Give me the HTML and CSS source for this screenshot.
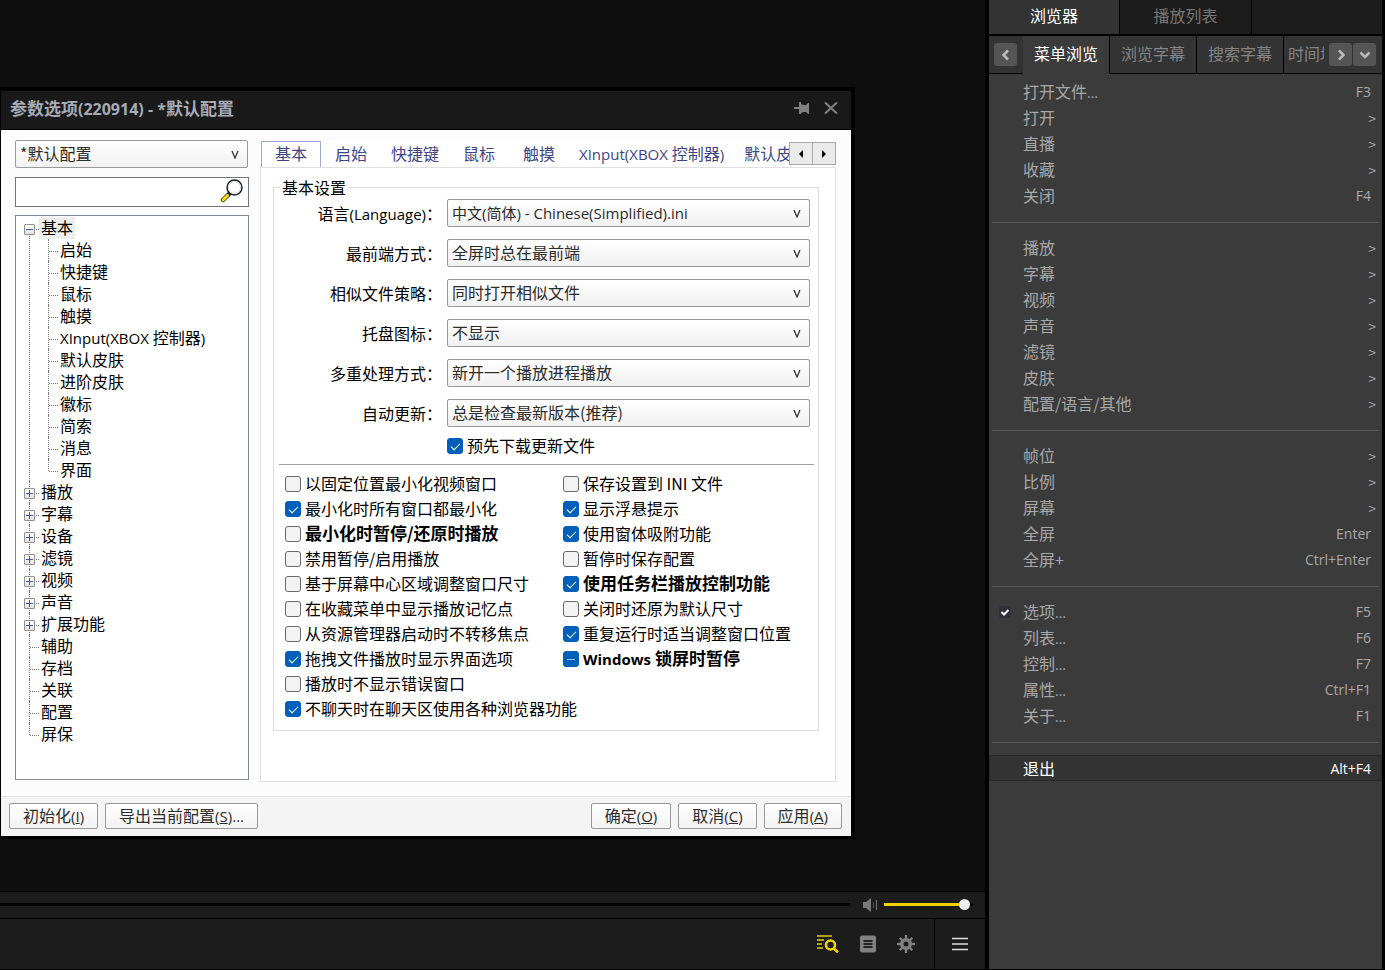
FILE: index.html
```
<!DOCTYPE html>
<html lang="zh-CN">
<head>
<meta charset="utf-8">
<title>参数选项</title>
<link rel="stylesheet" href="styles.css">
</head>
<body>
<div class="app">
  <main class="player">
    <div class="stage">
      <section class="dialog" aria-label="参数选项">
        <header class="dialog-head">
          <h1>参数选项<span class="en">(220914) - *</span>默认配置</h1>
          <button class="icon-btn" aria-label="置顶"><svg width="16" height="14" viewBox="0 0 16 14"><path d="M0 6h5v2H0zM5 1h2v2l2 1h3l2-2h1v11h-1l-2-2H9l-2 1v1H5z" fill="#808080"/></svg></button>
          <button class="icon-btn" aria-label="关闭"><svg width="14" height="14" viewBox="0 0 14 14"><path d="M1 1.500l12 11M13 1.500l-12 11" stroke="#808080" stroke-width="2" fill="none"/></svg></button>
        </header>
        <div class="dialog-body">
          <div class="side">
            <div class="combo profile"><select aria-label="配置"><option>*默认配置</option></select><svg width="8" height="9" viewBox="0 0 8 9"><path d="M1 1L4 8L7 1" /></svg></div>
            <div class="search"><input type="text" aria-label="搜索"><button class="icon-btn" aria-label="查找"><svg width="24" height="24" viewBox="0 0 24 24"><path d="M9.500 14.500L3 21" stroke="#222" stroke-width="4.500" stroke-linecap="round"/><path d="M7.500 16.500L3 21" stroke="#ffe100" stroke-width="3" stroke-linecap="round"/><circle cx="14.500" cy="8.500" r="7.500" fill="#fff" stroke="#222" stroke-width="1.500"/><circle cx="14.500" cy="8.500" r="6" fill="none" stroke="#d5d9e3"/></svg></button></div>
            <ul class="tree">
              <li><div class="node"><button class="expander" aria-label="折叠"></button><span class="name selected">基本</span></div>
                <ul>
                  <li><div class="node"><span class="name">启始</span></div></li>
                  <li><div class="node"><span class="name">快捷键</span></div></li>
                  <li><div class="node"><span class="name">鼠标</span></div></li>
                  <li><div class="node"><span class="name">触摸</span></div></li>
                  <li><div class="node"><span class="name"><span class="en">XInput(XBOX </span>控制器<span class="en">)</span></span></div></li>
                  <li><div class="node"><span class="name">默认皮肤</span></div></li>
                  <li><div class="node"><span class="name">进阶皮肤</span></div></li>
                  <li><div class="node"><span class="name">徽标</span></div></li>
                  <li><div class="node"><span class="name">简索</span></div></li>
                  <li><div class="node"><span class="name">消息</span></div></li>
                  <li><div class="node"><span class="name">界面</span></div></li>
                </ul>
              </li>
              <li><div class="node"><button class="expander plus" aria-label="展开"></button><span class="name">播放</span></div></li>
              <li><div class="node"><button class="expander plus" aria-label="展开"></button><span class="name">字幕</span></div></li>
              <li><div class="node"><button class="expander plus" aria-label="展开"></button><span class="name">设备</span></div></li>
              <li><div class="node"><button class="expander plus" aria-label="展开"></button><span class="name">滤镜</span></div></li>
              <li><div class="node"><button class="expander plus" aria-label="展开"></button><span class="name">视频</span></div></li>
              <li><div class="node"><button class="expander plus" aria-label="展开"></button><span class="name">声音</span></div></li>
              <li><div class="node"><button class="expander plus" aria-label="展开"></button><span class="name">扩展功能</span></div></li>
              <li><div class="node"><span class="name">辅助</span></div></li>
              <li><div class="node"><span class="name">存档</span></div></li>
              <li><div class="node"><span class="name">关联</span></div></li>
              <li><div class="node"><span class="name">配置</span></div></li>
              <li><div class="node"><span class="name">屏保</span></div></li>
            </ul>
          </div>
          <div class="content">
            <div class="tab-row">
              <div class="tabs" role="tablist">
                <button class="tab active" role="tab">基本</button>
                <button class="tab" role="tab">启始</button>
                <button class="tab" role="tab">快捷键</button>
                <button class="tab" role="tab">鼠标</button>
                <button class="tab" role="tab">触摸</button>
                <button class="tab" role="tab"><span class="en">XInput(XBOX </span>控制器<span class="en">)</span></button>
                <button class="tab" role="tab">默认皮肤</button>
              </div>
              <div class="spin">
                <button aria-label="向左"><svg width="4" height="8" viewBox="0 0 4 8"><path d="M4 0v8L0 4z"/></svg></button>
                <button aria-label="向右"><svg width="4" height="8" viewBox="0 0 4 8"><path d="M0 0v8l4-4z"/></svg></button>
              </div>
            </div>
            <div class="page">
              <fieldset>
                <legend>基本设置</legend>
                <div class="fields">
                  <label for="f1">语言<span class="en">(Language)</span>：</label><div class="combo"><select id="f1" class="mostly-en"><option>中文(简体) - Chinese(Simplified).ini</option></select><svg width="8" height="9" viewBox="0 0 8 9"><path d="M1 1L4 8L7 1"/></svg></div>
                  <label for="f2">最前端方式：</label><div class="combo"><select id="f2"><option>全屏时总在最前端</option></select><svg width="8" height="9" viewBox="0 0 8 9"><path d="M1 1L4 8L7 1"/></svg></div>
                  <label for="f3">相似文件策略：</label><div class="combo"><select id="f3"><option>同时打开相似文件</option></select><svg width="8" height="9" viewBox="0 0 8 9"><path d="M1 1L4 8L7 1"/></svg></div>
                  <label for="f4">托盘图标：</label><div class="combo"><select id="f4"><option>不显示</option></select><svg width="8" height="9" viewBox="0 0 8 9"><path d="M1 1L4 8L7 1"/></svg></div>
                  <label for="f5">多重处理方式：</label><div class="combo"><select id="f5"><option>新开一个播放进程播放</option></select><svg width="8" height="9" viewBox="0 0 8 9"><path d="M1 1L4 8L7 1"/></svg></div>
                  <label for="f6">自动更新：</label><div class="combo"><select id="f6"><option>总是检查最新版本(推荐)</option></select><svg width="8" height="9" viewBox="0 0 8 9"><path d="M1 1L4 8L7 1"/></svg></div>
                </div>
                <label class="check predownload"><input type="checkbox" checked><span>预先下载更新文件</span></label>
                <hr>
                <div class="checks">
                  <div>
                    <label class="check"><input type="checkbox"><span>以固定位置最小化视频窗口</span></label>
                    <label class="check"><input type="checkbox" checked><span>最小化时所有窗口都最小化</span></label>
                    <label class="check strong"><input type="checkbox"><span>最小化时暂停/还原时播放</span></label>
                    <label class="check"><input type="checkbox"><span>禁用暂停/启用播放</span></label>
                    <label class="check"><input type="checkbox"><span>基于屏幕中心区域调整窗口尺寸</span></label>
                    <label class="check"><input type="checkbox"><span>在收藏菜单中显示播放记忆点</span></label>
                    <label class="check"><input type="checkbox"><span>从资源管理器启动时不转移焦点</span></label>
                    <label class="check"><input type="checkbox" checked><span>拖拽文件播放时显示界面选项</span></label>
                    <label class="check"><input type="checkbox"><span>播放时不显示错误窗口</span></label>
                    <label class="check"><input type="checkbox" checked><span>不聊天时在聊天区使用各种浏览器功能</span></label>
                  </div>
                  <div>
                    <label class="check"><input type="checkbox"><span>保存设置到 INI 文件</span></label>
                    <label class="check"><input type="checkbox" checked><span>显示浮悬提示</span></label>
                    <label class="check"><input type="checkbox" checked><span>使用窗体吸附功能</span></label>
                    <label class="check"><input type="checkbox"><span>暂停时保存配置</span></label>
                    <label class="check strong"><input type="checkbox" checked><span>使用任务栏播放控制功能</span></label>
                    <label class="check"><input type="checkbox"><span>关闭时还原为默认尺寸</span></label>
                    <label class="check"><input type="checkbox" checked><span>重复运行时适当调整窗口位置</span></label>
                    <label class="check strong"><input type="checkbox" class="mixed" checked><span><span class="en">Windows </span>锁屏时暂停</span></label>
                  </div>
                </div>
              </fieldset>
            </div>
          </div>
        </div>
        <footer class="dialog-foot">
          <button class="btn">初始化<span class="en">(<u>I</u>)</span></button>
          <button class="btn">导出当前配置<span class="en">(<u>S</u>)...</span></button>
          <span class="grow"></span>
          <button class="btn">确定<span class="en">(<u>O</u>)</span></button>
          <button class="btn">取消<span class="en">(<u>C</u>)</span></button>
          <button class="btn">应用<span class="en">(<u>A</u>)</span></button>
        </footer>
      </section>
    </div>
    <div class="seek-row">
      <div class="seek"></div>
      <svg width="16" height="14" viewBox="0 0 16 14"><path d="M1 4h3l5-4v14l-5-4H1z" fill="#787878"/><path d="M11.500 4v6" stroke="#555"/><path d="M14.500 2v10" stroke="#787878"/></svg>
      <input class="volume" type="range" min="0" max="100" value="96" aria-label="音量">
    </div>
    <div class="tool-row">
      <div class="tools">
        <button class="icon-btn" aria-label="搜索列表"><svg width="22" height="18" viewBox="0 0 22 18"><path d="M0 1h15M0 5h7M0 9h5M0 13h6" stroke="#e6cf00" stroke-width="1.400"/><circle cx="13.500" cy="10" r="4.500" fill="none" stroke="#ecd400" stroke-width="2.600"/><path d="M17 13.500l4 4" stroke="#ecd400" stroke-width="2.600"/></svg></button>
        <button class="icon-btn" aria-label="播放列表"><svg width="16" height="18" viewBox="0 0 16 18"><rect y="0.500" width="16" height="17" rx="2" fill="#808080"/><path d="M3.500 6h9M3.500 9h9M3.500 12h9" stroke="#222" stroke-width="2"/></svg></button>
        <button class="icon-btn" aria-label="设置"><svg width="18" height="18" viewBox="0 0 18 18"><g stroke="#808080" stroke-width="2.400"><path d="M9 0v18M0 9h18M2.800 2.800l12.400 12.400M15.200 2.800L2.800 15.200"/></g><circle cx="9" cy="9" r="6" fill="#808080"/><circle cx="9" cy="9" r="2.500" fill="#1d1d1d"/></svg></button>
      </div>
      <button class="icon-btn burger" aria-label="菜单"><svg width="16" height="14" viewBox="0 0 16 14"><path d="M0 1.500h16M0 7h16M0 12.500h16" stroke="#ddd" stroke-width="1.600"/></svg></button>
    </div>
  </main>
  <aside class="panel">
    <div class="top-tabs">
      <button class="top-tab active">浏览器</button>
      <button class="top-tab">播放列表</button>
      <span class="top-rest"></span>
    </div>
    <div class="sub-tabs">
      <div class="prev"><button class="nav" aria-label="上一个"><svg width="8" height="12" viewBox="0 0 8 12"><path d="M6 1.500L1.500 6L6 10.500"/></svg></button></div>
      <button class="sub-tab active">菜单浏览</button>
      <button class="sub-tab">浏览字幕</button>
      <button class="sub-tab">搜索字幕</button>
      <button class="sub-tab cut"><span>时间均</span></button>
      <div class="next">
        <button class="nav" aria-label="下一个"><svg width="8" height="12" viewBox="0 0 8 12"><path d="M2 1.500L6.500 6L2 10.500"/></svg></button>
        <button class="nav" aria-label="更多"><svg width="12" height="8" viewBox="0 0 12 8"><path d="M1.500 1.500L6 6l4.500-4.500"/></svg></button>
      </div>
    </div>
    <div class="menu">
      <button class="item"><span>打开文件<span class="en">...</span></span><span class="en">F3</span></button>
      <button class="item">打开<span class="more">&gt;</span></button>
      <button class="item">直播<span class="more">&gt;</span></button>
      <button class="item">收藏<span class="more">&gt;</span></button>
      <button class="item">关闭<span class="en">F4</span></button>
      <hr>
      <button class="item">播放<span class="more">&gt;</span></button>
      <button class="item">字幕<span class="more">&gt;</span></button>
      <button class="item">视频<span class="more">&gt;</span></button>
      <button class="item">声音<span class="more">&gt;</span></button>
      <button class="item">滤镜<span class="more">&gt;</span></button>
      <button class="item">皮肤<span class="more">&gt;</span></button>
      <button class="item">配置/语言/其他<span class="more">&gt;</span></button>
      <hr>
      <button class="item">帧位<span class="more">&gt;</span></button>
      <button class="item">比例<span class="more">&gt;</span></button>
      <button class="item">屏幕<span class="more">&gt;</span></button>
      <button class="item">全屏<span class="en">Enter</span></button>
      <button class="item">全屏+<span class="en">Ctrl+Enter</span></button>
      <hr>
      <button class="item"><svg class="tick" width="12" height="12" viewBox="0 0 12 12"><rect width="12" height="12" rx="2" fill="#30303c"/><path d="M2.500 6l2.500 2.500L9.500 4" fill="none" stroke="#fff" stroke-width="2"/></svg><span>选项<span class="en">...</span></span><span class="en">F5</span></button>
      <button class="item"><span>列表<span class="en">...</span></span><span class="en">F6</span></button>
      <button class="item"><span>控制<span class="en">...</span></span><span class="en">F7</span></button>
      <button class="item"><span>属性<span class="en">...</span></span><span class="en">Ctrl+F1</span></button>
      <button class="item"><span>关于<span class="en">...</span></span><span class="en">F1</span></button>
      <hr>
      <button class="item hot">退出<span class="en">Alt+F4</span></button>
    </div>
  </aside>
</div>
</body>
</html>
```
FILE: styles.css
```
* { box-sizing: border-box; }
body {
  margin: 0;
  background: #000;
  font: 16px/22px "Noto Sans CJK SC", sans-serif;
}
button, input, select { font: inherit; color: inherit; margin: 0; }
button { padding: 0; border: 0; background: none; white-space: nowrap; }
svg { display: block; flex: none; }
ul { list-style: none; margin: 0; padding: 0; }
.en { font-family: "Open Sans", sans-serif; font-size: 14px; line-height: 20px; white-space: pre; }

.app { display: flex; min-height: 100vh; padding: 0 3px 1px 0; }
.player { flex: 1; min-width: 0; display: flex; flex-direction: column; margin-right: 4px; }
.stage { flex: 1; background: #0f0f0f; padding: 87px 130px 52px 0; }
.icon-btn { display: flex; align-items: center; justify-content: center; }

/* dialog */
.dialog { border: solid #000; border-width: 4px 4px 3px 1px; background: #fcfcfc; color: #000; }
.dialog .en { font-size: 15px; }
.dialog-head { display: flex; align-items: center; gap: 14px; height: 39px; padding: 0 13px 5px 9px; background: #191919; border-bottom: 1px solid #000; }
.dialog-head h1 { flex: 1; margin: 0; font-size: 17px; line-height: 22px; color: #a6abb8; }
.dialog .dialog-head .en { font-size: 16px; }
.dialog-body { display: grid; grid-template-columns: 234px 1fr; gap: 11px; padding: 10px 15px 14px 14px; }
.side { display: flex; flex-direction: column; padding-bottom: 2px; }
.combo { position: relative; height: 28px; }
.combo select { display: block; width: 100%; height: 100%; appearance: none; padding: 0 28px 2px 4px; border: 1px solid #999; border-radius: 2px; background: linear-gradient(#fff, #f1f1f1); color: #2c2c2c; }
.combo .mostly-en { font: 15px/22px "Open Sans", "Noto Sans CJK SC", sans-serif; padding-bottom: 0; }
.combo svg { position: absolute; right: 9px; top: 10px; fill: none; stroke: #333; stroke-width: 1.3; pointer-events: none; }
.profile { margin-right: 1px; }
.search { display: flex; align-items: center; height: 30px; margin: 9px 0 8px; padding: 0 4px 2px 0; border: 1px solid #70737d; background: #fff; }
.search input { flex: 1; min-width: 0; border: 0; outline: 0; background: none; }

.tree { flex: 1; padding: 1px 8px; border: 1px solid #828790; background: #fff; }
.tree li { position: relative; }
.tree li::before { content: ""; position: absolute; left: 5px; top: 0; bottom: 0; border-left: 1px dotted #777; }
.tree > li:first-child::before { top: 12px; }
.tree li:last-child::before { bottom: auto; height: 12px; }
.tree ul { margin-left: 19px; }
.node { position: relative; display: flex; align-items: flex-start; height: 22px; padding-left: 15px; }
.node::before { content: ""; position: absolute; left: 6px; top: 12px; width: 9px; border-top: 1px dotted #777; }
.name { height: 22px; padding: 0 2px; line-height: 20px; white-space: nowrap; }
.selected { background: #eee; }
.expander { position: absolute; left: 0; top: 7px; width: 11px; height: 11px; border: 1px solid #919191; border-radius: 1px; background: linear-gradient(#3f5a9c, #3f5a9c) center / 7px 1px no-repeat, linear-gradient(#fff, #e2e2e2); }
.plus { background: linear-gradient(#3f5a9c, #3f5a9c) center / 7px 1px no-repeat, linear-gradient(#3f5a9c, #3f5a9c) center / 1px 7px no-repeat, linear-gradient(#fff, #e2e2e2); }

.content { min-width: 0; display: flex; flex-direction: column; }
.tab-row { display: flex; height: 27px; padding-left: 1px; background: #fff; }
.tabs { flex: 1; min-width: 0; display: flex; overflow: hidden; padding-top: 1px; }
.tab { flex: none; min-width: 60px; padding: 0 10px 3px; color: #3d4587; }
.tab.active { border: 1px solid #a0a9d0; border-bottom: 0; }
.spin { display: flex; height: 23px; margin-top: 2px; }
.spin button { width: 24px; display: flex; align-items: center; justify-content: center; border: 1px solid #aaa; background: #eaeaea; }
.spin button + button { margin-left: -1px; }
.page { flex: 1; padding: 9px 16px 50px 12px; border: 1px solid #e0e0e0; background: #fff; }
fieldset { min-width: 0; margin: 0; padding: 2px 4px 8px 5px; border: 1px solid #dcdcdc; }
legend { margin-left: 1px; padding: 0 2px; line-height: 20px; }
.fields { display: grid; grid-template-columns: 163px 1fr; align-items: center; gap: 12px 5px; margin-right: 4px; }
.fields label { text-align: right; white-space: nowrap; }
.check { display: flex; align-items: center; gap: 4px; height: 25px; white-space: nowrap; }
.check > span { height: 24px; line-height: 22px; }
.check input { position: relative; flex: none; appearance: none; width: 16px; height: 16px; border: 1px solid #686868; border-radius: 3px; background: #f3f3f3; }
.check input:checked { border-color: #005fb8; background: #005fb8; }
.check input:checked::after { content: ""; position: absolute; left: 3px; top: 4px; width: 8px; height: 4px; border: solid #fff; border-width: 0 0 1px 1px; transform: rotate(-45deg); }
.check input.mixed:checked::after { top: 3px; border-left: 0; border-color: #8fc0ee; transform: none; }
.strong { font-size: 17px; font-weight: bold; }
.predownload { margin: 6px 0 6px 168px; }
hr { margin: 0; border: 0; border-top: 1px solid #a0a0a0; }
.checks { display: grid; grid-template-columns: 278px 1fr; padding: 6px 0 1px 6px; }

.dialog-foot { display: flex; gap: 7px; padding: 6px 9px 7px 8px; border-top: 1px solid #e0e0e0; background: #f4f4f4; }
.btn { height: 26px; padding: 0 13px 2px; border: 1px solid #999; border-radius: 2px; background: linear-gradient(#fff, #f3f3f3); color: #2c2c2c; }
.grow { flex: 1; }

/* player controls */
.seek-row { display: flex; align-items: center; height: 27px; margin-top: 1px; padding: 0 12px 1px 0; background: #1c1c1c; border-bottom: 1px solid #000; }
.seek { flex: 1; height: 3px; margin-right: 12px; background: #000; }
.volume { appearance: none; width: 89px; height: 11px; margin-left: 6px; background: linear-gradient(90deg, #ecd400 80px, #000 80px) center / 100% 3px no-repeat; }
.volume::-webkit-slider-thumb { appearance: none; width: 11px; height: 11px; border-radius: 50%; background: #eee; }
.tool-row { display: flex; height: 50px; background: #1c1c1c; }
.tools { flex: 1; display: flex; align-items: center; justify-content: flex-end; gap: 21px; padding-right: 19px; }
.burger { width: 51px; border-left: 1px solid #000; }

/* browser panel */
.panel { display: flex; flex-direction: column; width: 393px; background: #3b3b3b; color: #a8a8a8; }
.top-tabs { display: flex; height: 36px; padding-bottom: 2px; background: #000; gap: 1px; }
.top-tab { width: 131px; padding-bottom: 5px; background: #1c1c1c; color: #777; }
.top-tab.active { width: 130px; background: #333; color: #fff; }
.top-rest { flex: 1; background: #1c1c1c; }
.sub-tabs { display: flex; height: 38px; background: #333; }
.prev, .next { display: flex; align-items: center; gap: 1px; border-bottom: 1px solid #000; }
.prev { width: 34px; padding-left: 5px; }
.next { padding: 0 6px 0 5px; }
.nav { display: flex; align-items: center; justify-content: center; width: 23px; height: 23px; border-radius: 3px; background: #555; }
.nav svg { fill: none; stroke: #bbb; stroke-width: 2.5; }
.sub-tab { width: 87px; padding-bottom: 3px; border: solid #000; border-width: 0 1px 1px 0; color: #858585; }
.sub-tab.active { padding-bottom: 4px; background: #3b3b3b; color: #fff; border-bottom: 0; }
.sub-tab.cut { flex: 1; min-width: 0; padding-left: 4px; border-right: 0; text-align: left; }
.cut span { display: block; overflow: hidden; }
.menu { padding-top: 5px; }
.item { position: relative; display: flex; align-items: center; justify-content: space-between; width: 100%; height: 26px; padding: 0 11px 2px 34px; }
.item > .en, .item .more { padding-top: 2px; }
.item .more { margin-right: -5px; font-size: 14px; }
.item.hot { border: 1px solid #292929; padding: 0 10px 1px 33px; background: #333; color: #fff; }
.tick { position: absolute; left: 10px; top: 7px; }
.menu hr { margin: 13px 3px 12px; border-color: #575757; }
```
